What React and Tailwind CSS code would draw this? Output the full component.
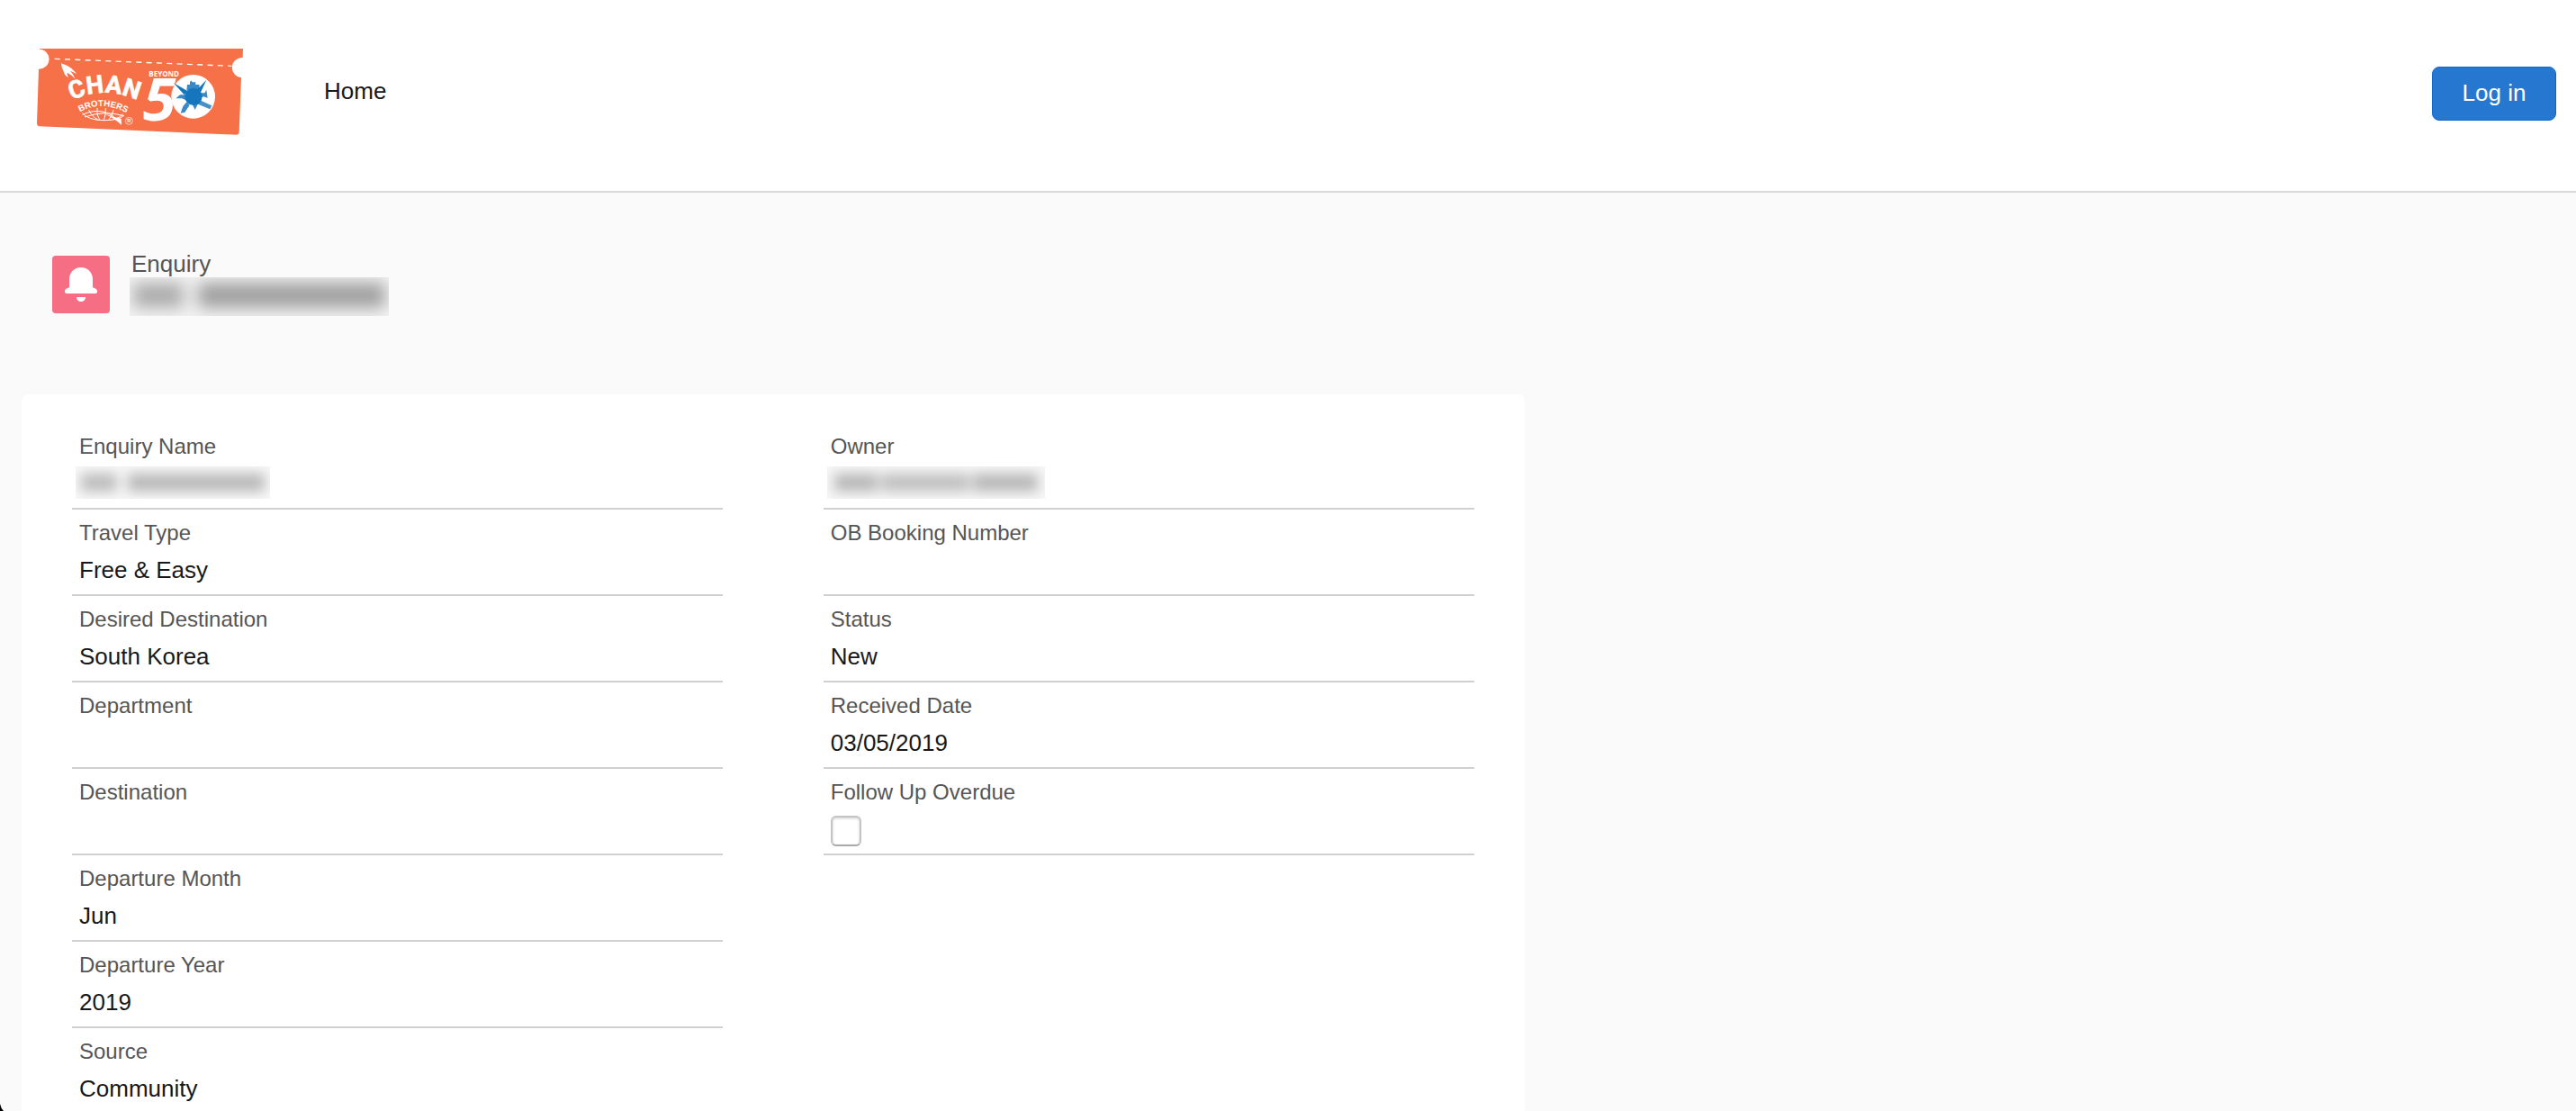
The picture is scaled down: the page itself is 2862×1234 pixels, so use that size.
import clsx from "clsx";

const leftFields = [
  { label: "Enquiry Name", masked: "name" },
  { label: "Travel Type", value: "Free & Easy" },
  { label: "Desired Destination", value: "South Korea" },
  { label: "Department" },
  { label: "Destination" },
  { label: "Departure Month", value: "Jun" },
  { label: "Departure Year", value: "2019" },
  { label: "Source", value: "Community" },
];

const rightFields = [
  { label: "Owner", masked: "owner" },
  { label: "OB Booking Number" },
  { label: "Status", value: "New" },
  { label: "Received Date", value: "03/05/2019" },
  { label: "Follow Up Overdue", checkbox: true },
];

function Logo() {
  return (
    <svg viewBox="60 72 690 288" className="h-24 w-[230px] overflow-visible" role="img" aria-label="Chan Brothers">
      {/* Ticket */}
      <path
        d="M72 72H750L749 102A33 33 0 0 0 744 168L737 350Q736 359 727 359L72 331Q63 330 63 321L69 140A33 33 0 0 0 72 74Z"
        fill="#f77148"
      />
      <path d="M122 106L712 130" stroke="#fff" strokeWidth="4" strokeDasharray="18 16" />

      {/* Swallow */}
      <path
        d="M144 121Q150 125 158 126Q176 132 196 157Q184 149 174 146Q186 158 190 173Q178 158 164 152Q162 160 168 168Q154 162 152 148Q145 137 144 121Z"
        fill="#fff"
      />

      {/* Wordmark over the globe */}
      <path id="chan" d="M180 244Q285 194 400 244" fill="none" />
      <text fill="#fff" stroke="#fff" strokeWidth="2" fontSize="82" fontWeight="bold" fontFamily="Roboto, sans-serif">
        <textPath href="#chan">CHAN</textPath>
      </text>
      <path id="brothers" d="M206 283Q285 240 374 293" fill="none" />
      <text fill="#fff" fontSize="29" fontWeight="bold" fontFamily="'Liberation Sans', sans-serif">
        <textPath href="#brothers">BROTHERS</textPath>
      </text>
      <g fill="none" stroke="#fff" strokeWidth="3">
        <path d="M214 286Q232 310 286 311Q336 311 354 294" />
        <path d="M236 276Q244 296 266 309M264 270Q260 290 272 310M292 270Q294 290 286 311M318 276Q316 294 302 310M350 290Q340 302 316 309" />
        <path d="M214 292Q290 258 344 322M222 300Q290 276 352 296" />
      </g>
      <path d="M286 288Q316 300 344 306L345 326Q322 305 286 288Z" fill="#fff" />
      <circle cx="370" cy="313" r="12" fill="none" stroke="#fff" strokeWidth="2" />
      <text x="364" y="319" fontSize="17" fontWeight="bold" fill="#fff" fontFamily="'Liberation Sans', sans-serif">R</text>

      {/* Anniversary mark */}
      <text x="436" y="165" fontSize="24" fontWeight="bold" fill="#fff" fontFamily="'Open Sans', sans-serif">BEYOND</text>
      <text x="416" y="313" fontSize="200" fontWeight="bold" fontStyle="italic" fill="#fff" fontFamily="'Open Sans', sans-serif">5</text>
      <circle cx="584" cy="232" r="73" fill="#fff" />
      <g fill="#1676bd">
        <circle cx="585" cy="232" r="29" />
        <path d="M518 186L566 214L554 226ZM628 176L596 210L608 220Z" />
        <path d="M562 210L564 192L573 192L573 184L577 178L581 184L592 184L592 192L604 192L606 212ZM540 226L562 226L560 244L546 238L526 238ZM608 220L622 220L628 210L632 236L618 232L608 236Z" opacity="0.85" />
        <path d="M606 244L646 262L640 274L596 256Z" opacity="0.8" />
        <path d="M542 287L550 264L562 250L572 260L556 284ZM580 256L600 256L590 276Z" opacity="0.85" />
      </g>
    </svg>
  );
}

function BellIcon() {
  return (
    <svg viewBox="0 0 64 64" className="size-16 shrink-0 rounded-sm bg-[#f56e84]" aria-hidden="true">
      <path d="M32 13c-7.500 0-13 5.700-13 13v9c-1.500 1.200-5 1.600-5 4.500V40c0 1.300 1 2 2 2h32c1.200 0 2-.8 2-2v-.5c0-2.900-3.500-3.300-5-4.500v-9c0-7.300-5.500-13-13-13Z" fill="#fff" />
      <path d="M27 46h10c0 3-2.200 5-5 5s-5-2-5-5Z" fill="#fff" />
    </svg>
  );
}

// Blurred strip shown instead of a private value
function Masked({ kind }) {
  return (
    <div
      className={clsx(
        "flex items-center overflow-hidden",
        kind === "title" && "h-[43px] w-72 bg-[#f4f4f4]",
        kind === "name" && "-ml-1 mt-1 h-9 w-54 bg-[#f8f8f8]",
        kind === "owner" && "-ml-1 mt-1 h-9 w-[242px] bg-[#f7f7f7]"
      )}
    >
      {kind === "title" && (
        <div className="flex w-full gap-4 px-1 pb-1 blur-[9px]">
          <span className="h-7 w-14 bg-[#acacac]" />
          <span className="h-7 flex-1 bg-[#9f9f9f]" />
        </div>
      )}
      {kind === "name" && (
        <div className="flex w-full gap-3 px-1.5 blur-[7px]">
          <span className="h-5 w-10 bg-[#bcbcbc]" />
          <span className="h-5 flex-1 bg-[#b8b8b8]" />
        </div>
      )}
      {kind === "owner" && (
        <div className="flex w-full gap-1 px-2 blur-[7px]">
          <span className="h-5 w-12 bg-[#b8b8b8]" />
          <span className="h-5 flex-1 bg-[#c0c0c0]" />
          <span className="h-5 w-18 bg-[#b8b8b8]" />
        </div>
      )}
    </div>
  );
}

function Field({ field }) {
  return (
    <div className="border-b-2 border-[#d0d0d0] px-2 pt-2 pb-1">
      <dt className="text-2xl leading-9 text-[#555555]">
        {field.checkbox ? <label htmlFor="follow-up-overdue">{field.label}</label> : field.label}
      </dt>
      <dd className="flow-root h-[46px] text-[26px] leading-[46px] text-[#181818]">
        {field.masked && <Masked kind={field.masked} />}
        {field.checkbox && (
          <div className="flex pt-2">
            <input
              id="follow-up-overdue"
              type="checkbox"
              className="size-[34px] appearance-none rounded-md border-2 border-[#c4c4c4] border-b-[#aaaaaa] bg-white shadow-[inset_0_1px_3px_#cccccc]"
            />
          </div>
        )}
        {field.value}
      </dd>
    </div>
  );
}

export default function App() {
  return (
    <div className="flex h-screen flex-col bg-[#fafafa] font-['Liberation_Sans',Arial,sans-serif] text-[26px] text-[#181818]">
      <header className="flex h-[214px] shrink-0 items-start justify-between border-b-2 border-[#d9d9d9] bg-white pr-[22px] pl-10">
        <div className="flex items-start gap-[90px]">
          <a href="#" className="mt-[54px]">
            <Logo />
          </a>
          <nav className="pt-20">
            <a href="#" className="leading-[42px]">Home</a>
          </nav>
        </div>
        <button
          type="button"
          className="mt-[74px] h-[60px] w-[138px] rounded-lg border border-[#0d68c8] bg-[#2677d0] pb-0.5 text-white"
        >
          Log in
        </button>
      </header>

      <main className="flex-1 overflow-hidden">
        <div className="flex h-56 items-start gap-[22px] px-[58px] pt-[70px]">
          <BellIcon />
          <div>
            <h1 className="-mt-2 h-8 pl-0.5 leading-[34px] text-[#555555]">Enquiry</h1>
            <Masked kind="title" />
          </div>
        </div>

        <section className="ml-6 w-7/12 rounded-lg bg-white px-14 py-8">
          <div className="grid grid-cols-2 items-start gap-28">
            <dl>
              {leftFields.map((field) => (
                <Field key={field.label} field={field} />
              ))}
            </dl>
            <dl>
              {rightFields.map((field) => (
                <Field key={field.label} field={field} />
              ))}
            </dl>
          </div>
        </section>
      </main>

      {/* Dark sliver of the rounded window corner */}
      <svg viewBox="0 0 4 8" className="fixed bottom-0 left-0 h-2 w-1" aria-hidden="true">
        <path d="M0 0Q1 5 4 8H0Z" fill="#000" />
      </svg>
    </div>
  );
}
